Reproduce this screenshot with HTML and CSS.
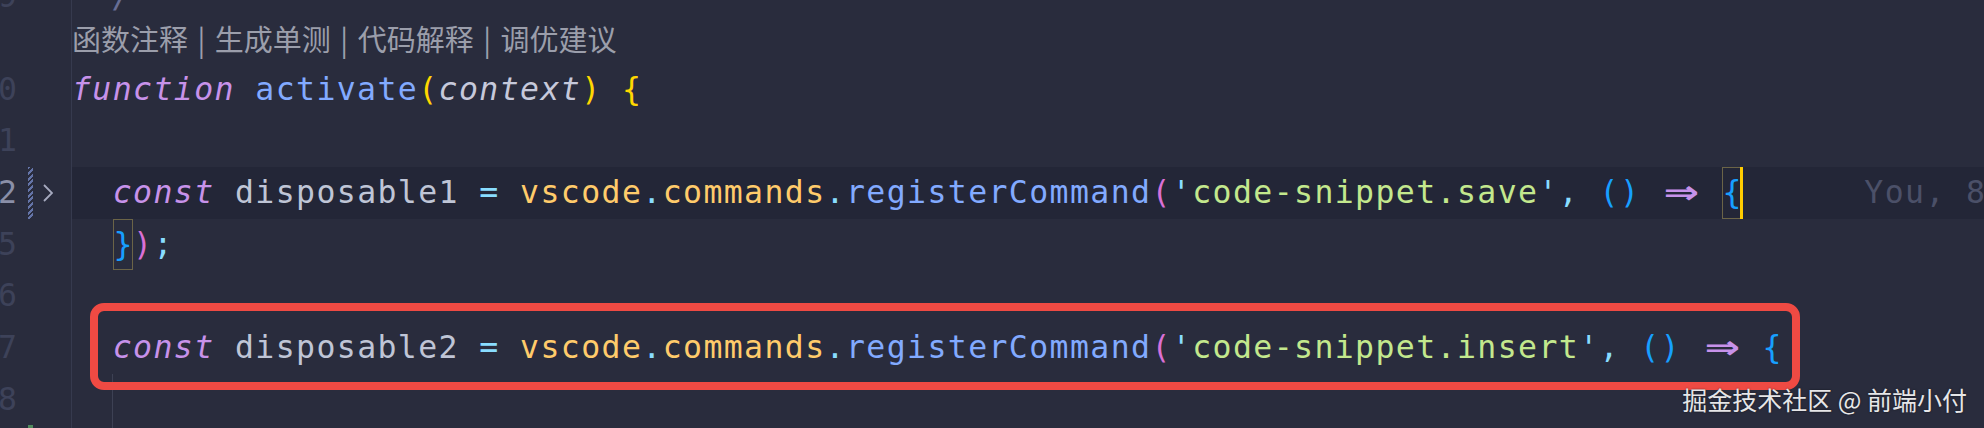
FILE: index.html
```html
<!DOCTYPE html>
<html lang="zh-CN">
<head>
<meta charset="utf-8">
<title>Editor</title>
<link rel="stylesheet" href="styles.css">
</head>
<body>
<div class="editor">
  <div class="row">
    <div class="gutter"><span class="ln">9</span><span class="git"></span><span class="fold"></span></div>
    <div class="code"><span class="cm"> */</span></div>
  </div>
  <div class="row lens-row">
    <div class="gutter"></div>
    <div class="code lens">函数注释 | 生成单测 | 代码解释 | 调优建议</div>
  </div>
  <div class="row">
    <div class="gutter"><span class="ln">10</span><span class="git"></span><span class="fold"></span></div>
    <div class="code"><span class="kw">function</span> <span class="fn">activate</span><span class="b1">(</span><span class="param">context</span><span class="b1">)</span> <span class="b1">{</span></div>
  </div>
  <div class="row">
    <div class="gutter"><span class="ln">11</span><span class="git"></span><span class="fold"></span></div>
    <div class="code"></div>
  </div>
  <div class="row current">
    <div class="gutter"><span class="ln active">12</span><span class="git modified"></span><span class="fold"><svg class="chev" viewBox="0 0 10 18" width="10" height="18"><polyline points="1,1 9,9 1,17" fill="none" stroke="#a6aabf" stroke-width="1.8"/></svg></span></div>
    <div class="code">  <span class="kw">const</span> <span class="var">disposable1</span> <span class="pn">=</span> <span class="obj">vscode</span><span class="pn">.</span><span class="obj">commands</span><span class="pn">.</span><span class="fn">registerCommand</span><span class="b2">(</span><span class="pn">'</span><span class="str">code-snippet.save</span><span class="pn">'</span><span class="pn">,</span> <span class="b3">()</span> <span class="arrow"><span class="arrow-glyph">⇒</span></span> <span class="b3 match cursor">{</span>      <span class="blame">You, 8 months ago • feat: 代码片段</span></div>
  </div>
  <div class="row">
    <div class="gutter"><span class="ln">15</span><span class="git"></span><span class="fold"></span></div>
    <div class="code">  <span class="b3 match">}</span><span class="b2">)</span><span class="pn">;</span></div>
  </div>
  <div class="row">
    <div class="gutter"><span class="ln">16</span><span class="git"></span><span class="fold"></span></div>
    <div class="code"></div>
  </div>
  <div class="row">
    <div class="gutter"><span class="ln">17</span><span class="git"></span><span class="fold"></span></div>
    <div class="code">  <span class="kw">const</span> <span class="var">disposable2</span> <span class="pn">=</span> <span class="obj">vscode</span><span class="pn">.</span><span class="obj">commands</span><span class="pn">.</span><span class="fn">registerCommand</span><span class="b2">(</span><span class="pn">'</span><span class="str">code-snippet.insert</span><span class="pn">'</span><span class="pn">,</span> <span class="b3">()</span> <span class="arrow"><span class="arrow-glyph">⇒</span></span> <span class="b3">{</span></div>
  </div>
  <div class="row">
    <div class="gutter"><span class="ln">18</span><span class="git"></span><span class="fold"></span></div>
    <div class="code guide2"></div>
  </div>
  <div class="row">
    <div class="gutter"><span class="ln">19</span><span class="git added"></span><span class="fold"></span></div>
    <div class="code guide2"></div>
  </div>
</div>
<div class="annot-box"></div>
<div class="watermark">掘金技术社区 @ 前端小付</div>
</body>
</html>
```

FILE: styles.css
```css
html, body {
  margin: 0;
  padding: 0;
  width: 1984px;
  height: 428px;
  overflow: hidden;
  background: #292c3d;
}

body {
  position: relative;
  font-family: "DejaVu Sans Mono", "Liberation Mono", monospace;
}

.editor {
  margin-top: -29.3px;
  height: 457.3px;
  overflow: hidden;
  display: flex;
  flex-direction: column;
}

.row {
  display: grid;
  grid-template-columns: 71px 1fr;
  height: 51.67px;
  flex: none;
}

.lens-row {
  height: 41.4px;
}

.gutter {
  display: flex;
  align-items: stretch;
  height: 100%;
}

.ln {
  width: 17px;
  display: flex;
  justify-content: flex-end;
  overflow: hidden;
  font-size: 31.5px;
  line-height: 51.67px;
  color: #3d4259;
  white-space: nowrap;
}

.ln.active {
  color: #8a8fa8;
}

.git {
  width: 5px;
  margin-left: 11px;
}

.git.modified {
  background: repeating-linear-gradient(135deg, #6474a8 0 2px, transparent 2px 4px);
}

.git.added {
  background: #4f8a5d;
}

.fold {
  width: 10px;
  margin-left: 10px;
  display: flex;
  align-items: center;
}

.chev {
  display: block;
}

.code {
  border-left: 1px solid #363a4e;
  white-space: pre;
  overflow: hidden;
  font-size: 31.5px;
  letter-spacing: 1.4px;
  line-height: 51.67px;
  color: #bfc5d6;
}

.current .code {
  background: #232637;
}

.guide2 {
  background: linear-gradient(#3d4154, #3d4154) no-repeat 40px 0 / 1px 100%;
}

.lens {
  font-family: "Noto Sans CJK SC", "Noto Sans", sans-serif;
  font-size: 29px;
  letter-spacing: 0;
  word-spacing: 3px;
  line-height: 33px;
  color: #9b9eab;
}

.cm { color: #676e95; font-style: italic; }
.kw { color: #c792ea; font-style: italic; }
.fn { color: #82aaff; }
.obj { color: #ffcb6b; }
.pn { color: #89ddff; }
.str { color: #c3e88d; }
.var { color: #bfc5d6; }
.param { color: #c6c9db; font-style: italic; }
.b1 { color: #ffd700; }
.b2 { color: #da70d6; }
.b3 { color: #179fff; }
.blame { color: #4b5068; letter-spacing: 1.4px; }

.arrow {
  display: inline-block;
  width: 40.72px;
  text-align: center;
  color: #c792ea;
  letter-spacing: 0;
}

.arrow-glyph {
  display: inline-block;
  font-family: "DejaVu Sans", sans-serif;
  font-weight: bold;
  transform: scaleX(1.35);
}

.match {
  display: inline-block;
  width: 20.36px;
  height: 51.67px;
  letter-spacing: 0;
  text-align: center;
  box-shadow: inset 0 0 0 1px #6b6447;
  position: relative;
  vertical-align: top;
}

.cursor::after {
  content: "";
  position: absolute;
  right: -1px;
  top: 0;
  width: 3.5px;
  height: 100%;
  background: #ffcc00;
}

.annot-box {
  position: absolute;
  left: 90px;
  top: 303px;
  width: 1710px;
  height: 87px;
  box-sizing: border-box;
  border: 8px solid #ef4a43;
  border-radius: 14px;
}

.watermark {
  position: absolute;
  right: 17px;
  top: 384px;
  font-family: "Noto Sans CJK SC", "Noto Sans", sans-serif;
  font-size: 25px;
  line-height: 30px;
  color: #e6e6e8;
  text-shadow: 0 0 2px rgba(0, 0, 0, 0.6);
  white-space: nowrap;
}
```
